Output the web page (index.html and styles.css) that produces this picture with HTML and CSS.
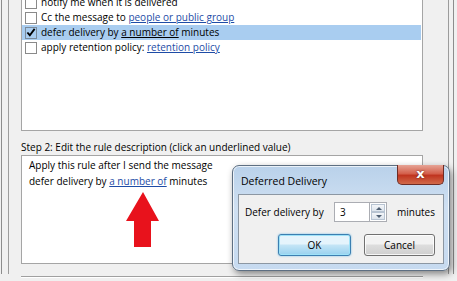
FILE: index.html
```html
<!DOCTYPE html>
<html lang="en">
  <head>
    <meta charset="UTF-8" />
    <title>Rules Wizard</title>
    <link rel="stylesheet" href="styles.css">
  </head>
  <body>
    <div class="win">
      <div class="pane">
        <div class="listbox">
          <div class="row">
            <span class="check"></span>
            <span>notify me when it is delivered</span>
          </div>
          <div class="row">
            <span class="check"></span>
            <span>Cc the message to <a class="link">people or public group</a></span>
          </div>
          <div class="row selected">
            <span class="check">
              <svg width="11" height="11" viewBox="0 0 11 11">
                <path d="M1.5 5.5 L4.2 8.5 L9.5 1.5" fill="none" stroke="#000" stroke-width="2" />
              </svg>
            </span>
            <span>defer delivery by <u>a number of</u> minutes</span>
          </div>
          <div class="row">
            <span class="check"></span>
            <span>apply retention policy: <a class="link">retention policy</a></span>
          </div>
        </div>

        <div class="step">Step 2: Edit the rule description (click an underlined value)</div>

        <div class="desc">
          <div>Apply this rule after I send the message</div>
          <div>defer delivery by <a class="link">a number of</a> minutes</div>
        </div>

        <div class="separator"></div>
      </div>
    </div>

    <!-- red arrow pointing at the link -->
    <svg class="arrow" width="33" height="56" viewBox="0 0 33 56">
      <polygon points="17,0 33,29 25,29 25,55 8,55 8,29 0,29" fill="#e8121c" />
    </svg>

    <!-- dialog on top -->
    <div class="dialog">
      <div class="titlebar">
        <span>Deferred Delivery</span>
        <span class="close">x</span>
      </div>
      <div class="panel">
        <div class="field">
          <span class="label">Defer delivery by</span>
          <span class="spin">
            <span class="spin-input">3</span>
            <span class="spin-btns">
              <span class="spin-up"></span>
              <span class="spin-down"></span>
            </span>
          </span>
          <span>minutes</span>
        </div>
        <div class="buttons">
          <span class="button default">OK</span>
          <span class="button">Cancel</span>
        </div>
      </div>
    </div>
  </body>
</html>
```

FILE: styles.css
```css
* {
  margin: 0;
  box-sizing: border-box;
}
body {
  width: 457px;
  height: 281px;
  overflow: hidden;
  background: #f0f0f0;
  font-family: "Open Sans", "Liberation Sans", sans-serif;
  font-size: 10px;
  color: #000;
  position: relative;
}
.win {
  height: 281px;
  width: 453px;
  margin-left: 1px;
  border-left: 1px solid #8c8c8c;
  border-right: 1px solid #8c8c8c;
  padding: 0 4px 0 6px;
}
.pane {
  height: 281px;
  border-left: 1px solid #9c9c9c;
  border-right: 1px solid #9c9c9c;
  padding: 0 25px 0 12px;
}
.listbox {
  margin-top: -7px;
  height: 138px;
  background: #fff;
  border: 1px solid #a5a5a5;
  padding-top: 1px;
}
.row {
  display: flex;
  align-items: center;
  height: 15px;
  line-height: 15px;
  padding-left: 3px;
  margin-right: 1px;
  white-space: nowrap;
}
.row.selected {
  background: #a9cdf0;
}
.check {
  width: 12px;
  height: 12px;
  border: 1px solid #8a8a8a;
  background: #fff;
  margin-right: 4px;
  display: flex;
  align-items: center;
  justify-content: center;
}
.row.selected .check {
  background: transparent;
  border-color: #7a8a9a;
}
.link {
  color: #1e4ca6;
  text-decoration: underline;
}
.step {
  margin-top: 8px;
  line-height: 16px;
  white-space: nowrap;
}
.desc {
  margin-top: 0;
  height: 109px;
  background: #fff;
  border: 1px solid #a5a5a5;
  padding: 1px 7px;
  line-height: 16px;
}
.separator {
  margin-top: 12px;
  border-top: 1px solid #a0a0a0;
  border-bottom: 1px solid #fff;
}
.arrow {
  position: absolute;
  left: 126px;
  top: 192px;
}
.dialog {
  position: absolute;
  left: 232px;
  top: 165px;
  width: 218px;
  height: 106px;
  border: 1px solid #5e6f82;
  border-radius: 7px;
  background: linear-gradient(#b9d1ea, #cfe0f2 40%, #c6daf0);
  box-shadow: 2px 3px 7px rgba(0, 0, 0, 0.45), inset 0 0 0 1px rgba(255, 255, 255, 0.7);
  display: flex;
  flex-direction: column;
  white-space: nowrap;
}
.titlebar {
  height: 28px;
  display: flex;
  align-items: center;
  justify-content: space-between;
  padding-left: 8px;
  padding-top: 2px;
  font-size: 10.5px;
  position: relative;
}
.close {
  position: absolute;
  right: 5px;
  top: -1px;
  width: 47px;
  height: 20px;
  border: 1px solid #6d2c25;
  border-top: none;
  border-radius: 0 0 5px 5px;
  background: linear-gradient(#e6a496, #d4604c 45%, #c03520 55%, #d16a4a);
  color: #fff;
  font-family: "DejaVu Sans", sans-serif;
  font-weight: bold;
  font-size: 13px;
  line-height: 17px;
  text-align: center;
  text-shadow: 0 0 2px #5a1a10;
}
.panel {
  flex: 1;
  margin: 0 5px 6px 5px;
  background: #f0f0f0;
  border: 1px solid #8c97a3;
  padding: 7px 8px 0 6px;
}
.field {
  display: flex;
  align-items: center;
  height: 20px;
}
.label {
  width: 92px;
}
.spin {
  display: flex;
  height: 20px;
  margin-right: 10px;
}
.spin-input {
  width: 35px;
  background: #fff;
  border: 1px solid #abadb3;
  border-right: none;
  padding: 2px 0 0 5px;
}
.spin-btns {
  width: 18px;
  display: flex;
  flex-direction: column;
  border: 1px solid #abadb3;
  background: #fff;
  padding: 1px;
}
.spin-up,
.spin-down {
  flex: 1;
  background: linear-gradient(#f4f6f9, #dde4ec);
  border: 1px solid #b8c4d2;
  position: relative;
}
.spin-up::after,
.spin-down::after {
  content: "";
  position: absolute;
  left: 4px;
  border-left: 3px solid transparent;
  border-right: 3px solid transparent;
}
.spin-up::after {
  top: 2px;
  border-bottom: 3px solid #4e5f73;
}
.spin-down::after {
  top: 2px;
  border-top: 3px solid #4e5f73;
}
.buttons {
  display: flex;
  justify-content: flex-end;
  gap: 13px;
  margin-top: 12px;
}
.button {
  display: block;
  width: 71px;
  height: 22px;
  line-height: 20px;
  text-align: center;
  border: 1px solid #707070;
  border-radius: 3px;
  background: linear-gradient(#f2f2f2 45%, #dddddd 50%, #cfcfcf);
  box-shadow: inset 0 0 0 1px rgba(255, 255, 255, 0.8);
}
.button.default {
  width: 73px;
  border-color: #3c7fb1;
  background: linear-gradient(#e5f4fc 45%, #c4e5f6 50%, #98d1ef);
  box-shadow: inset 0 0 0 1px #9ee2f8, 0 0 2px #62b6e4;
}
```
